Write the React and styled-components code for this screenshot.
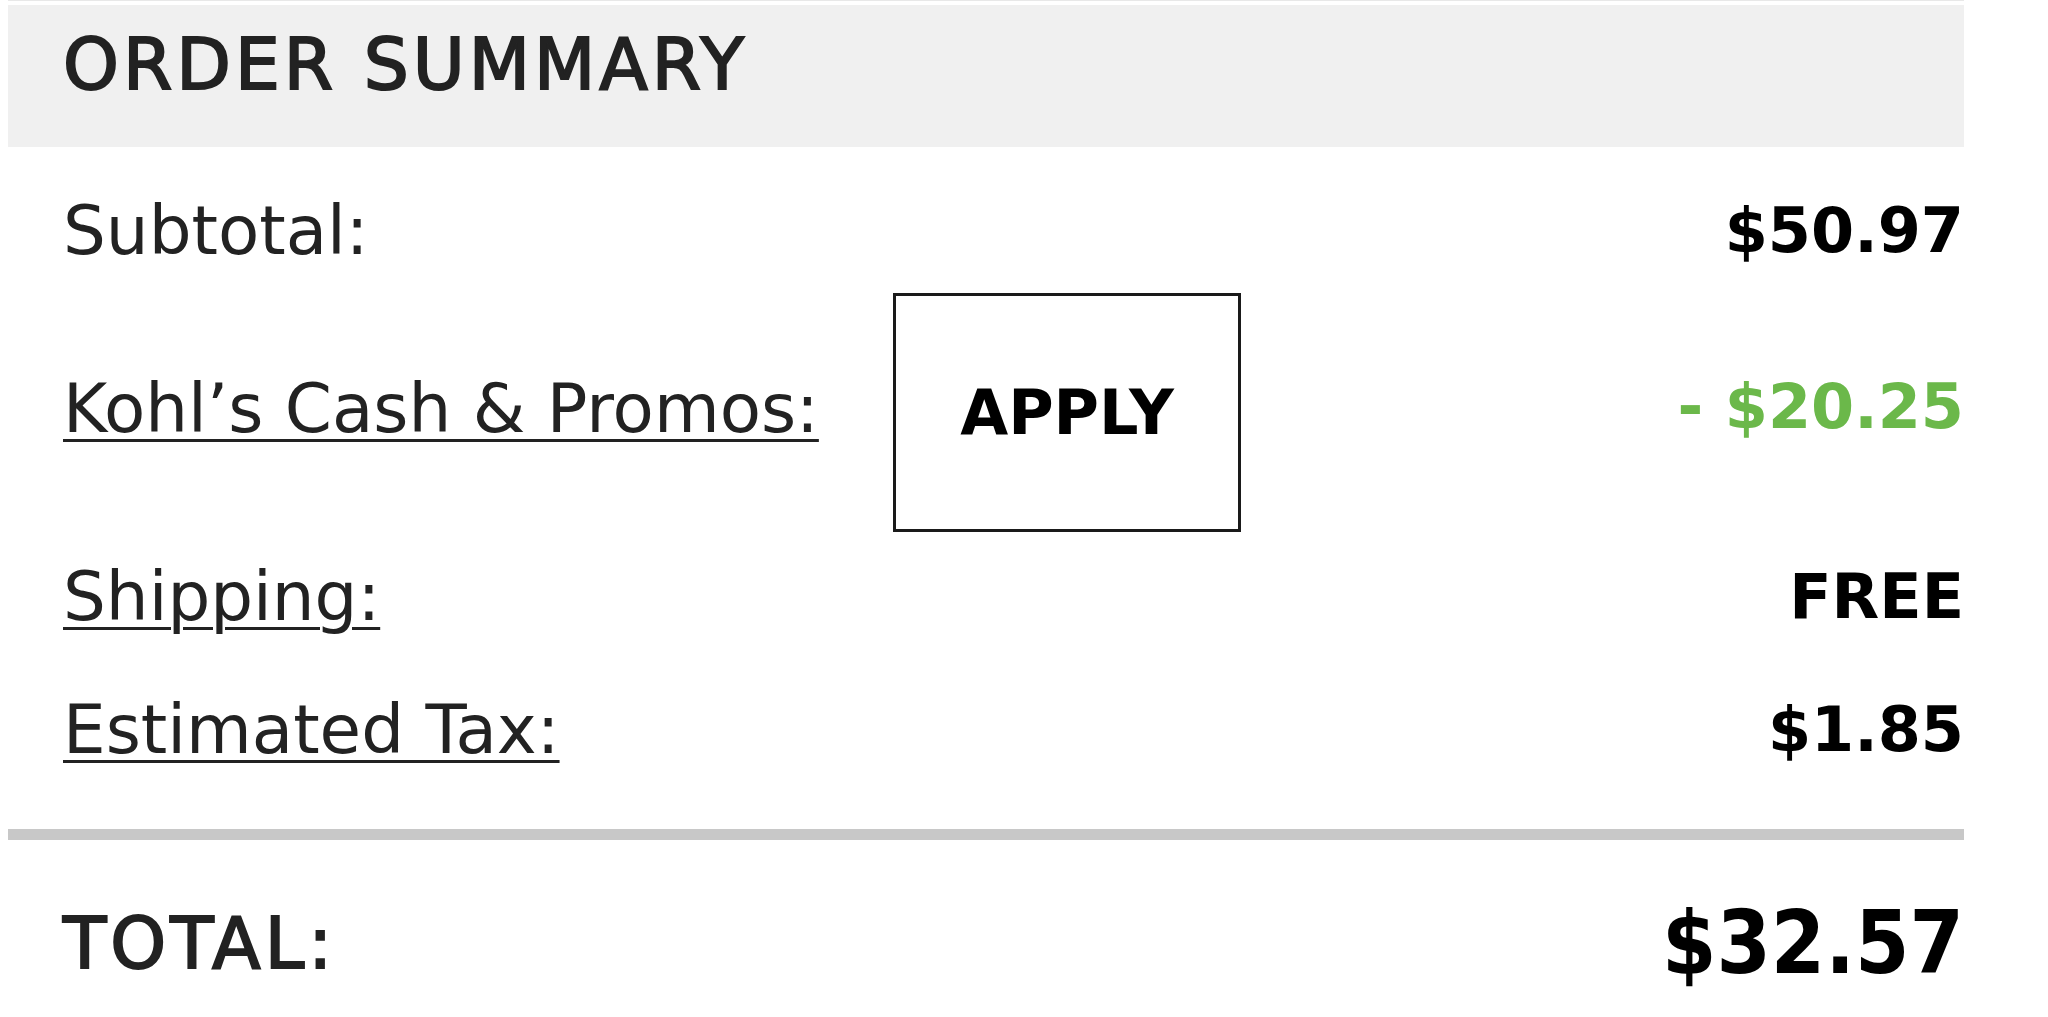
import React from "react";
import styled, { createGlobalStyle } from "styled-components";

const GlobalStyle = createGlobalStyle`
  html, body {
    margin: 0;
    padding: 0;
    background: #ffffff;
  }
  body {
    font-family: "DejaVu Sans", "Liberation Sans", sans-serif;
    color: #222222;
  }
`;

const Summary = styled.section`
  margin-left: 8px;
  width: 1956px;
  border-top: 1px solid #e8e8e8;
  padding-top: 4px;
`;

const Header = styled.h2`
  margin: 0;
  height: 142px;
  box-sizing: border-box;
  padding: 18px 0 0 55px;
  background: #f0f0f0;
  font-size: 71px;
  line-height: 83px;
  font-weight: 400;
  letter-spacing: 4px;
  color: #222222;
  -webkit-text-stroke: 2px #222222;
  text-transform: uppercase;
`;

const Lines = styled.div`
  display: flex;
  flex-direction: column;
  padding-left: 55px;
`;

const Row = styled.div`
  display: flex;
  align-items: center;
  justify-content: space-between;
  margin-top: ${(p) => p.$gap}px;
`;

const PromoRow = styled.div`
  display: grid;
  grid-template-columns: 830px 348px 1fr;
  align-items: center;
  margin-top: ${(p) => p.$gap}px;
`;

const Label = styled.span`
  font-size: 67.5px;
  line-height: normal;
  color: #222222;
  text-decoration: ${(p) => (p.$link ? "underline" : "none")};
  text-decoration-thickness: 3px;
  text-underline-offset: 7px;
  cursor: ${(p) => (p.$link ? "pointer" : "default")};
`;

const PromoLabel = styled(Label)`
  margin-bottom: 8px;
`;

const Amount = styled.span`
  justify-self: end;
  font-size: 62px;
  font-weight: 700;
  line-height: normal;
  color: ${(p) => (p.$green ? "#6bb84a" : "#000000")};
`;

const PromoAmount = styled(Amount)`
  margin-bottom: 12px;
`;

const ApplyButton = styled.button`
  box-sizing: border-box;
  width: 348px;
  height: 239px;
  padding: 0;
  border: 3px solid #1a1a1a;
  border-radius: 0;
  background: #ffffff;
  font-family: "DejaVu Sans", "Liberation Sans", sans-serif;
  font-size: 62px;
  font-weight: 700;
  color: #000000;
  cursor: pointer;
`;

const Divider = styled.hr`
  margin: 60px 0 0;
  border: 0;
  height: 11px;
  background: #c8c8c8;
`;

const TotalRow = styled.div`
  display: flex;
  align-items: center;
  justify-content: space-between;
  padding-left: 55px;
  margin-top: 52px;
`;

const TotalLabel = styled.span`
  font-size: 71px;
  line-height: normal;
  letter-spacing: 4px;
  color: #222222;
  -webkit-text-stroke: 2px #222222;
`;

const TotalAmount = styled.span`
  font-family: "DejaVu Sans Condensed", "DejaVu Sans", sans-serif;
  font-stretch: condensed;
  font-size: 87px;
  font-weight: 700;
  line-height: normal;
  color: #000000;
`;

export default function App() {
  return (
    <>
      <GlobalStyle />
      <Summary>
        <Header>Order Summary</Header>
        <Lines>
          <Row $gap={44}>
            <Label>Subtotal:</Label>
            <Amount>$50.97</Amount>
          </Row>
          <PromoRow $gap={23}>
            <PromoLabel $link>Kohl’s Cash &amp; Promos:</PromoLabel>
            <ApplyButton type="button">APPLY</ApplyButton>
            <PromoAmount $green>- $20.25</PromoAmount>
          </PromoRow>
          <Row $gap={25}>
            <Label $link>Shipping:</Label>
            <Amount>FREE</Amount>
          </Row>
          <Row $gap={54}>
            <Label $link>Estimated Tax:</Label>
            <Amount>$1.85</Amount>
          </Row>
        </Lines>
        <Divider />
        <TotalRow>
          <TotalLabel>TOTAL:</TotalLabel>
          <TotalAmount>$32.57</TotalAmount>
        </TotalRow>
      </Summary>
    </>
  );
}
